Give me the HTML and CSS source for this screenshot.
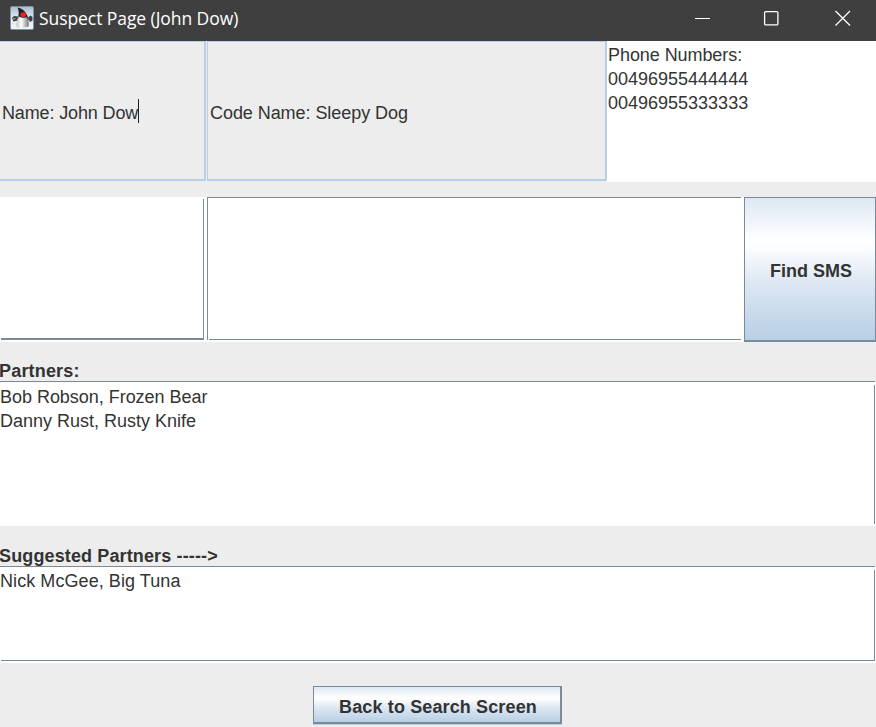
FILE: index.html
```html
<!DOCTYPE html>
<html lang="en">
<head>
<meta charset="utf-8">
<title>Suspect Page (John Dow)</title>
<link rel="stylesheet" href="styles.css">
</head>
<body>
<div class="window">
  <header class="titlebar">
    <svg class="app-icon" viewBox="0 0 24 24">
      <defs>
        <linearGradient id="tile" x1="0" y1="0" x2="0" y2="1"><stop offset="0" stop-color="#a9bdce"/><stop offset=".5" stop-color="#e4e9ed"/><stop offset="1" stop-color="#f3f3f3"/></linearGradient>
        <linearGradient id="belly" x1="0" y1="0" x2="1" y2="0"><stop offset="0" stop-color="#c4c4c4"/><stop offset=".4" stop-color="#fff"/><stop offset="1" stop-color="#777"/></linearGradient>
      </defs>
      <rect x=".5" y=".5" width="23" height="23" rx="1.5" fill="url(#tile)" stroke="#7792aa"/>
      <path d="M8 10.500 4 10 2 12l1.500 3.500 4-1zM18 11.500l2.500-2 2 1.500v3.500L20 16l-1-2z" fill="#39424a"/>
      <path d="M3 12h2.500v1.500H3z" fill="#b38a35"/>
      <path d="M7.500 1.500c5.500 1 9 5 10.500 10l1 3-2-1.500H8C8.500 9 9.500 6 7.500 1.500z" fill="#202124"/>
      <path d="M9 10.500c2.500 1.500 5.500 1.500 8 .8 2 4 2.200 7 1.500 9.200-2 1-3.500 .5-5.500 1-2 .3-4.500 .2-6.500-.5-.5-3.500 .5-7 2.500-10.500z" fill="url(#belly)"/>
      <ellipse cx="13.300" cy="8.700" rx="2.800" ry="2.400" fill="#ed2029"/>
    </svg>
    <span class="title">Suspect Page (John Dow)</span>
    <svg class="controls" viewBox="0 0 160 24">
      <path d="M0 12.500h15" stroke="#fff" fill="none"/>
      <rect x="69.600" y="5.600" width="13.300" height="13.300" rx="1.200" stroke="#fff" stroke-width="1.300" fill="none"/>
      <path d="m140.500 5 14.500 14.500m0-14.500-14.500 14.500" stroke="#fff" stroke-width="1.300" fill="none"/>
    </svg>
  </header>
  <section class="details">
    <div class="field name"><span class="t-name">Name: John Dow</span><i class="caret"></i></div>
    <div class="field code"><span class="t-code">Code Name: Sleepy Dog</span></div>
    <div class="phones"><span class="t-phone">Phone Numbers:</span><br>00496955444444<br>00496955333333</div>
  </section>
  <section class="sms">
    <div class="sender"><div class="sender-line"></div></div>
    <div class="message"><div class="message-line"></div></div>
    <button class="btn find"><span class="t-find">Find SMS</span></button>
  </section>
  <h2 class="label"><span class="t-partners">Partners:</span></h2>
  <section class="area partners">
    <div class="lines"><span class="t-bob">Bob Robson, Frozen Bear</span><br>Danny Rust, Rusty Knife</div>
  </section>
  <h2 class="label second"><span class="t-suggested">Suggested Partners -----&gt;</span></h2>
  <section class="area suggested">
    <div class="lines"><span class="t-nick">Nick McGee, Big Tuna</span></div>
  </section>
  <footer class="footer"><button class="btn back"><span class="t-back">Back to Search Screen</span></button></footer>
</div>
</body>
</html>
```
FILE: styles.css
```css
* { box-sizing: border-box; }
body { margin: 0; background: #ededed; color: #333; font: 18px/24px "Liberation Sans", Arial, sans-serif; overflow: hidden; }
.window { width: 876px; height: 727px; display: flex; flex-direction: column; }
.titlebar { height: 41px; flex: none; display: flex; align-items: flex-start; padding: 6px 21px 0 10px; background: #3f3f3f; color: #fff; }
.app-icon { width: 24px; height: 24px; }
.title { margin-left: 5px; font: 17.5px/25px "Open Sans", "Noto Sans", sans-serif; letter-spacing: -.07px; white-space: nowrap; }
.controls { width: 160px; height: 24px; margin-left: auto; }
.details { height: 141px; flex: none; display: flex; align-items: flex-start; }
.field { height: 140px; display: flex; align-items: center; border: solid #b8cfe5; border-width: 1px 2px 2px 1px; padding: 4px 0 0 2px; white-space: nowrap; }
.name { width: 206px; border-left: 0; margin-right: 1px; }
.code { width: 400px; }
.t-name { letter-spacing: -.13px; }
.t-code { letter-spacing: -.06px; }
.t-phone { letter-spacing: -.07px; }
.t-bob { letter-spacing: -.03px; }
.t-nick { letter-spacing: .07px; }
.t-find { letter-spacing: -.02px; }
.t-partners { letter-spacing: .18px; }
.t-suggested { letter-spacing: .13px; }
.t-back { letter-spacing: .13px; }
.caret { width: 1px; height: 24px; background: #222; margin-top: -3px; }
.phones { flex: 1; height: 141px; background: #fff; padding: 2px 0 0 1px; }
.sms { height: 145px; flex: none; margin-top: 15px; display: flex; background: #fff; }
.sender { width: 207px; padding-top: 2px; }
.sender-line { height: 141px; width: 203px; margin-left: 1px; border-right: 1px solid #7a8a99; border-bottom: 2px solid #7a8a99; }
.message { width: 534px; height: 143px; border-top: 1px solid #7a8a99; border-left: 1px solid #7a8a99; margin-right: 3px; }
.message-line { height: 142px; margin-left: 1px; border-bottom: 1px solid #7a8a99; }
.btn { margin: 0; padding: 0; border: solid #7a8a99; color: #333; font: bold 18px/22px "Liberation Sans", Arial, sans-serif; background: linear-gradient(#dde8f3, #fff 30%, #fff 33%, #dce7f2 60%, #b8cfe5); }
.find { width: 132px; height: 145px; border-width: 1px 1px 2px; padding: 3px 0 0 2px; }
.label { height: 39px; flex: none; margin: 0; padding-top: 17px; text-indent: -1px; font: bold 18px/24px "Liberation Sans", Arial, sans-serif; }
.label.second { height: 40px; padding-top: 18px; }
.area { flex: none; background: linear-gradient(#7a8a99, #7a8a99) 0 0 / 875px 1px no-repeat #fff; }
.partners { height: 145px; padding: 4px 1px 2px 0; }
.partners .lines { height: 139px; border-right: 1px solid #7a8a99; }
.suggested { height: 97px; padding: 4px 1px 2px; }
.suggested .lines { height: 91px; border: solid #7a8a99; border-width: 0 1px 1px 0; text-indent: -1px; line-height: 22px; }
.footer { display: flex; justify-content: center; padding: 23px 1px 0 0; }
.back { width: 249px; height: 38px; border-width: 1px 2px 2px 1px; padding: 4px 0 0 2px; box-shadow: 0 1px 0 #b8cfe5; }
```
